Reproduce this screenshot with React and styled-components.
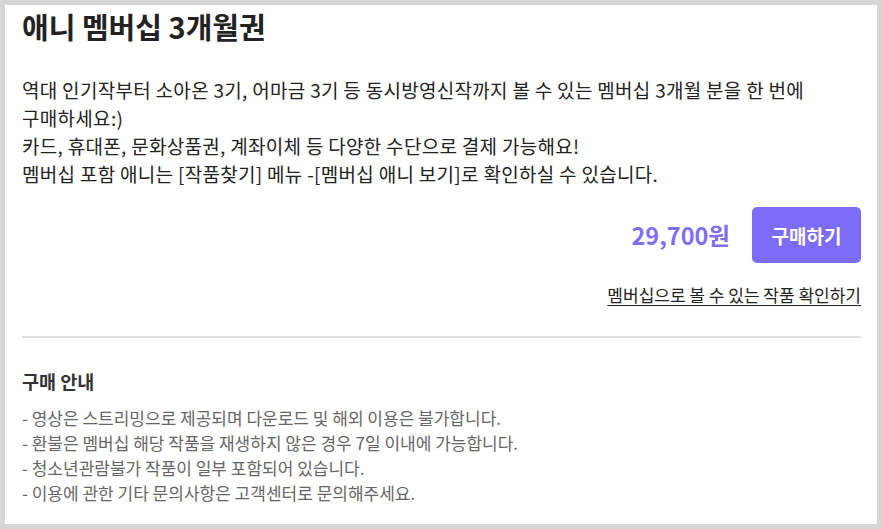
import styled, { createGlobalStyle } from 'styled-components';

const GlobalStyle = createGlobalStyle`
  html, body {
    margin: 0;
    padding: 0;
    background: #d6d6d6;
  }
  body {
    font-family: "Noto Sans CJK KR", "Noto Sans", sans-serif;
    color: #222;
    word-break: keep-all;
  }
`;

const guides = [
  '- 영상은 스트리밍으로 제공되며 다운로드 및 해외 이용은 불가합니다.',
  '- 환불은 멤버십 해당 작품을 재생하지 않은 경우 7일 이내에 가능합니다.',
  '- 청소년관람불가 작품이 일부 포함되어 있습니다.',
  '- 이용에 관한 기타 문의사항은 고객센터로 문의해주세요.'
];

const App = () => {
  return (
    <>
      <GlobalStyle />
      <Frame>
        <Panel>
          <Title>애니 멤버십 3개월권</Title>
          <Description>
            역대 인기작부터 소아온 3기, 어마금 3기 등 동시방영신작까지 볼 수 있는 멤버십 3개월 분을 한 번에
            구매하세요:)
            <br />
            카드, 휴대폰, 문화상품권, 계좌이체 등 다양한 수단으로 결제 가능해요!
            <br />
            멤버십 포함 애니는 [작품찾기] 메뉴 -[멤버십 애니 보기]로 확인하실 수 있습니다.
          </Description>
          <PurchaseRow>
            <Price>29,700원</Price>
            <BuyButton type="button">구매하기</BuyButton>
          </PurchaseRow>
          <LinkRow>
            <TitlesLink href="#">멤버십으로 볼 수 있는 작품 확인하기</TitlesLink>
          </LinkRow>
          <Divider />
          <GuideTitle>구매 안내</GuideTitle>
          <GuideList>
            {guides.map((g) => (
              <GuideItem key={g}>{g}</GuideItem>
            ))}
          </GuideList>
        </Panel>
      </Frame>
    </>
  );
};

const Frame = styled.div`
  width: 882px;
  height: 529px;
  box-sizing: border-box;
  padding: 5px;
  display: flex;
`;

const Panel = styled.div`
  flex: 1;
  background: #fff;
  padding: 2px 16px 0 17px;
  display: flex;
  flex-direction: column;
`;

const Title = styled.h1`
  margin: 0;
  font-size: 29px;
  line-height: 38px;
  font-weight: 700;
  color: #222;
`;

const Description = styled.p`
  margin: 31px 0 0;
  font-size: 19px;
  line-height: 28px;
  color: #222;
  letter-spacing: 0.3px;
  max-width: 820px;
`;

const PurchaseRow = styled.div`
  margin-top: 19px;
  display: flex;
  justify-content: flex-end;
  align-items: center;
  gap: 22px;
`;

const Price = styled.span`
  font-size: 23.5px;
  font-weight: 700;
  color: #7f6ff0;
`;

const BuyButton = styled.button`
  width: 109px;
  height: 56px;
  border: none;
  border-radius: 5px;
  background: #7d6cf5;
  color: #fff;
  font-family: inherit;
  font-size: 19px;
  font-weight: 700;
  cursor: pointer;
`;

const LinkRow = styled.div`
  margin-top: 20px;
  display: flex;
  justify-content: flex-end;
  line-height: 24px;
`;

const TitlesLink = styled.a`
  font-size: 17px;
  color: #222;
  text-decoration: underline;
  text-underline-offset: 3px;
`;

const Divider = styled.hr`
  margin: 29px 0 0;
  border: none;
  height: 2px;
  background: #e0e0e0;
`;

const GuideTitle = styled.h2`
  margin: 30px 0 0;
  font-size: 18.5px;
  line-height: 26px;
  font-weight: 700;
  color: #333;
`;

const GuideList = styled.ul`
  margin: 11px 0 0;
  padding: 0;
  list-style: none;
`;

const GuideItem = styled.li`
  font-size: 17px;
  line-height: 25px;
  color: #666;
`;

export default App;
